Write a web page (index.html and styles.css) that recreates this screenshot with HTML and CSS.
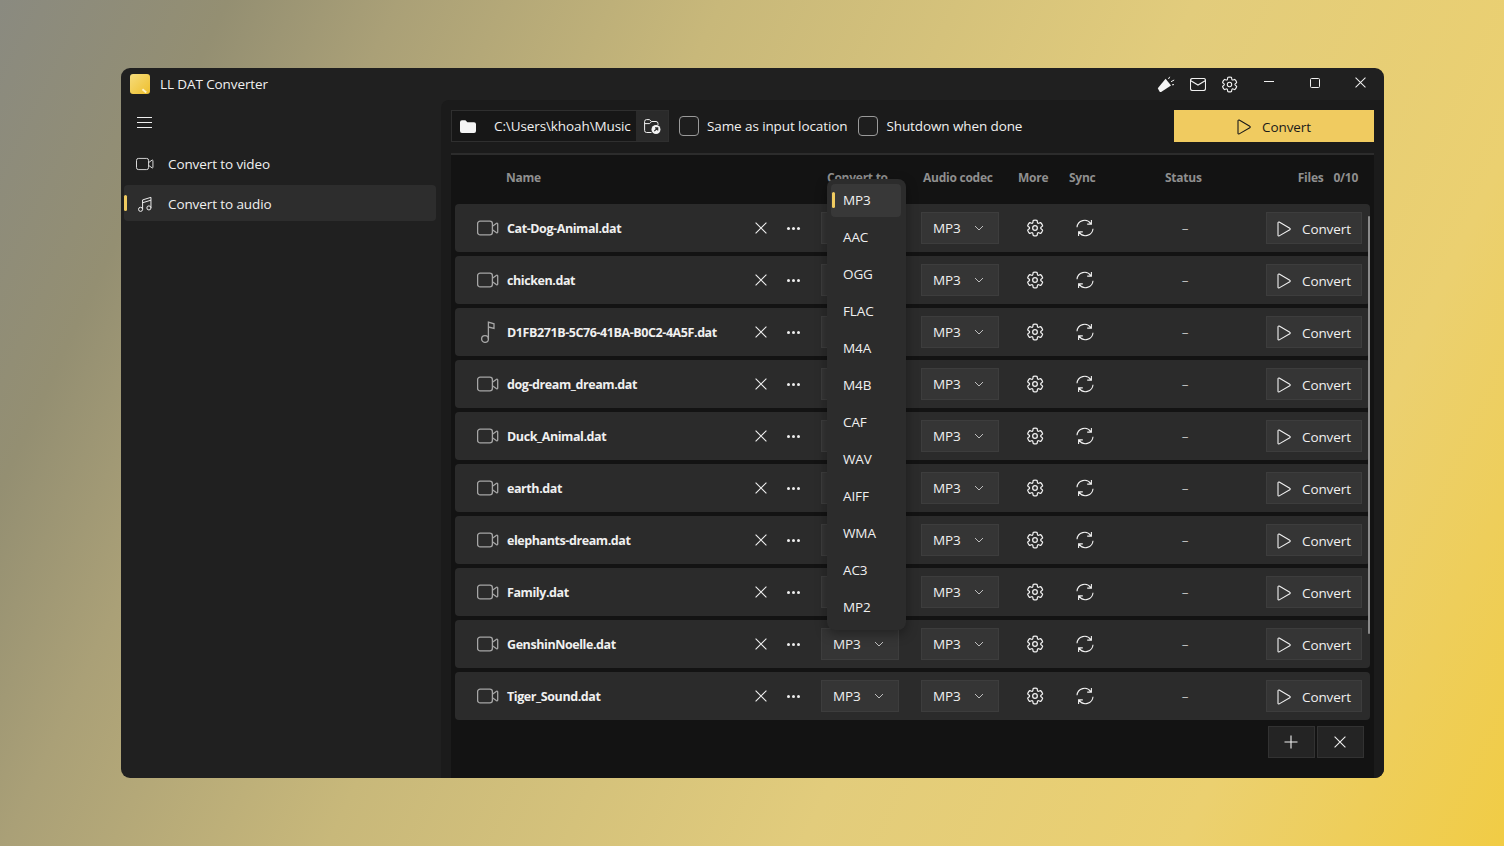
FILE: index.html
```html
<!DOCTYPE html>
<html lang="en">
<head>
<meta charset="utf-8">
<title>LL DAT Converter</title>
<link rel="stylesheet" href="styles.css">
</head>
<body>
<svg class="defs" width="0" height="0" aria-hidden="true">
  <symbol id="i-video" viewBox="0 0 22 16"><rect x=".6" y="1.1" width="14.8" height="13.8" rx="2.6"/><path d="M15.4 6.3l4.2-3a.7.7 0 0 1 1.1.6v8.2a.7.7 0 0 1-1.1.6l-4.2-3"/></symbol>
  <symbol id="i-note" viewBox="0 0 16 22"><circle cx="5" cy="18" r="3.4"/><path d="M8.4 18V1.200l5.600 1.600v4.600L8.400 6"/></symbol>
  <symbol id="i-music" viewBox="0 0 16 18"><circle cx="3" cy="15" r="2.3"/><circle cx="12.4" cy="13.4" r="2.3"/><path d="M5.3 15V4.400l9.400-2.900v11.900M5.300 7.600l9.400-2.900"/></symbol>
  <symbol id="i-x" viewBox="0 0 12 12"><path d="M.6.6l10.800 10.800M11.400.6L.6 11.400"/></symbol>
  <symbol id="i-chev" viewBox="0 0 10 6"><path d="M1 1l4 4 4-4"/></symbol>
  <symbol id="i-gear" viewBox="0 0 20 20"><path d="M1.91 7.38A8.5 8.5 0 0 1 3.78 4.17a.5.5 0 0 1 .54-.14l1.92.69a1 1 0 0 0 1.32-.76l.36-2.01a.5.5 0 0 1 .39-.4 8.5 8.5 0 0 1 3.7 0c.2.04.35.2.38.4l.37 2.01a1 1 0 0 0 1.32.76l1.92-.69a.5.5 0 0 1 .54.14 8.5 8.5 0 0 1 1.87 3.21.5.5 0 0 1-.15.53l-1.56 1.32a1 1 0 0 0 0 1.52l1.56 1.32a.5.5 0 0 1 .15.53 8.5 8.5 0 0 1-1.87 3.21.5.5 0 0 1-.54.14l-1.92-.69a1 1 0 0 0-1.32.76l-.37 2.01a.5.5 0 0 1-.38.4 8.5 8.5 0 0 1-3.7 0 .5.5 0 0 1-.39-.4l-.36-2.01a1 1 0 0 0-1.32-.76l-1.92.69a.5.5 0 0 1-.54-.14 8.5 8.5 0 0 1-1.87-3.21.5.5 0 0 1 .15-.53l1.56-1.32a1 1 0 0 0 0-1.52L2.06 7.91a.5.5 0 0 1-.15-.53Z"/><circle cx="10" cy="10" r="2.6"/></symbol>
  <symbol id="i-sync" viewBox="0 0 18 18"><path d="M1 8.300A7.600 7.600 0 0 1 14.800 4.600M17 9.700A7.600 7.600 0 0 1 3.200 13.400M15.400.9v4.200h-4.200M2.600 17.100v-4.200h4.200"/></symbol>
  <symbol id="i-play" viewBox="0 0 14 16"><path d="M1 1.800a.8.8 0 0 1 1.200-.7l10.600 6.200a.8.8 0 0 1 0 1.400L2.200 14.900a.8.8 0 0 1-1.200-.7z"/></symbol>
</svg>

<div class="window">
  <header class="titlebar">
    <div class="logo"><span class="logo-mark"></span></div>
    <span class="app-title">LL DAT Converter</span>
    <div class="title-actions">
      <svg class="ico-mega" viewBox="0 0 18 17"><path class="solid" d="M.8 12.300L8.600 2.800 14 9.500 4.500 15.800A1.600 1.600 0 0 1 2.500 15.600z"/><path class="thin" d="M11.500 3l1.200-2.200M14 5.700l3.200-1.700M15 8.800l2-.2"/></svg>
      <svg class="ico-mail line" viewBox="0 0 16 13"><rect x=".5" y=".5" width="15" height="12" rx="2"/><path d="M.8 2.800L8 7l7.200-4.200"/></svg>
      <svg class="ico-16 line" viewBox="0 0 20 20"><use href="#i-gear"/></svg>
    </div>
    <div class="caption">
      <span class="cap-min"></span>
      <span class="cap-max"></span>
      <svg class="ico-x11 line" viewBox="0 0 12 12"><use href="#i-x"/></svg>
    </div>
  </header>

  <div class="body">
    <aside class="sidebar">
      <div class="hamburger"><span></span><span></span><span></span></div>
      <nav class="nav">
        <a class="nav-item"><svg class="nav-ico line" viewBox="0 0 22 16"><use href="#i-video"/></svg>Convert to video</a>
        <a class="nav-item active"><svg class="nav-ico-music line" viewBox="0 0 16 18"><use href="#i-music"/></svg>Convert to audio</a>
      </nav>
    </aside>

    <main class="main">
      <div class="toolbar">
        <div class="path-box">
          <svg class="ico-folder" viewBox="0 0 16 13"><path d="M0 2.200A2 2 0 0 1 2 .2h3.400l2 2H14a2 2 0 0 1 2 2V11a2 2 0 0 1-2 2H2a2 2 0 0 1-2-2z"/></svg>
          <span class="path-text">C:\Users\khoah\Music</span>
          <span class="path-btn">
            <svg class="ico-open" viewBox="0 0 17 15"><path class="thin" d="M7.500 13.500H2.600a2 2 0 0 1-2-2V2.600a2 2 0 0 1 2-2h2.900l1.800 1.900H12a2 2 0 0 1 2 2v1.400M.6 4.600h5l1.800-1.800"/><circle class="solid" cx="12" cy="10.500" r="4.500"/><path class="cut" d="M10.300 12.200l3.200-3.200M11 8.800h2.700v2.700"/></svg>
          </span>
        </div>
        <label class="check"><span class="box"></span>Same as input location</label>
        <label class="check"><span class="box"></span>Shutdown when done</label>
        <button class="primary"><svg class="ico-play" viewBox="0 0 14 16"><use href="#i-play"/></svg>Convert</button>
      </div>

      <section class="panel">
        <div class="head">
          <span>Name</span><span>Convert to</span><span>Audio codec</span><span>More</span><span>Sync</span><span>Status</span>
          <span class="head-files"><span>Files</span><span>0/10</span></span>
        </div>
        <div class="rows">
          <div class="row">
            <svg class="file-ico line dim" viewBox="0 0 22 16"><use href="#i-video"/></svg>
            <span class="name">Cat-Dog-Animal.dat</span>
            <svg class="ico-x line" viewBox="0 0 12 12"><use href="#i-x"/></svg>
            <span class="dots"><i></i><i></i><i></i></span>
            <span class="combo">MP3<svg class="chev" viewBox="0 0 10 6"><use href="#i-chev"/></svg></span>
            <span class="combo">MP3<svg class="chev" viewBox="0 0 10 6"><use href="#i-chev"/></svg></span>
            <svg class="ico-gear line" viewBox="0 0 20 20"><use href="#i-gear"/></svg>
            <svg class="ico-sync line" viewBox="0 0 18 18"><use href="#i-sync"/></svg>
            <span class="dash">–</span>
            <button class="run"><svg class="ico-play" viewBox="0 0 14 16"><use href="#i-play"/></svg>Convert</button>
          </div>
          <div class="row">
            <svg class="file-ico line dim" viewBox="0 0 22 16"><use href="#i-video"/></svg>
            <span class="name">chicken.dat</span>
            <svg class="ico-x line" viewBox="0 0 12 12"><use href="#i-x"/></svg>
            <span class="dots"><i></i><i></i><i></i></span>
            <span class="combo">MP3<svg class="chev" viewBox="0 0 10 6"><use href="#i-chev"/></svg></span>
            <span class="combo">MP3<svg class="chev" viewBox="0 0 10 6"><use href="#i-chev"/></svg></span>
            <svg class="ico-gear line" viewBox="0 0 20 20"><use href="#i-gear"/></svg>
            <svg class="ico-sync line" viewBox="0 0 18 18"><use href="#i-sync"/></svg>
            <span class="dash">–</span>
            <button class="run"><svg class="ico-play" viewBox="0 0 14 16"><use href="#i-play"/></svg>Convert</button>
          </div>
          <div class="row">
            <svg class="note-ico line dim" viewBox="0 0 16 22"><use href="#i-note"/></svg>
            <span class="name">D1FB271B-5C76-41BA-B0C2-4A5F.dat</span>
            <svg class="ico-x line" viewBox="0 0 12 12"><use href="#i-x"/></svg>
            <span class="dots"><i></i><i></i><i></i></span>
            <span class="combo">MP3<svg class="chev" viewBox="0 0 10 6"><use href="#i-chev"/></svg></span>
            <span class="combo">MP3<svg class="chev" viewBox="0 0 10 6"><use href="#i-chev"/></svg></span>
            <svg class="ico-gear line" viewBox="0 0 20 20"><use href="#i-gear"/></svg>
            <svg class="ico-sync line" viewBox="0 0 18 18"><use href="#i-sync"/></svg>
            <span class="dash">–</span>
            <button class="run"><svg class="ico-play" viewBox="0 0 14 16"><use href="#i-play"/></svg>Convert</button>
          </div>
          <div class="row">
            <svg class="file-ico line dim" viewBox="0 0 22 16"><use href="#i-video"/></svg>
            <span class="name">dog-dream_dream.dat</span>
            <svg class="ico-x line" viewBox="0 0 12 12"><use href="#i-x"/></svg>
            <span class="dots"><i></i><i></i><i></i></span>
            <span class="combo">MP3<svg class="chev" viewBox="0 0 10 6"><use href="#i-chev"/></svg></span>
            <span class="combo">MP3<svg class="chev" viewBox="0 0 10 6"><use href="#i-chev"/></svg></span>
            <svg class="ico-gear line" viewBox="0 0 20 20"><use href="#i-gear"/></svg>
            <svg class="ico-sync line" viewBox="0 0 18 18"><use href="#i-sync"/></svg>
            <span class="dash">–</span>
            <button class="run"><svg class="ico-play" viewBox="0 0 14 16"><use href="#i-play"/></svg>Convert</button>
          </div>
          <div class="row">
            <svg class="file-ico line dim" viewBox="0 0 22 16"><use href="#i-video"/></svg>
            <span class="name">Duck_Animal.dat</span>
            <svg class="ico-x line" viewBox="0 0 12 12"><use href="#i-x"/></svg>
            <span class="dots"><i></i><i></i><i></i></span>
            <span class="combo">MP3<svg class="chev" viewBox="0 0 10 6"><use href="#i-chev"/></svg></span>
            <span class="combo">MP3<svg class="chev" viewBox="0 0 10 6"><use href="#i-chev"/></svg></span>
            <svg class="ico-gear line" viewBox="0 0 20 20"><use href="#i-gear"/></svg>
            <svg class="ico-sync line" viewBox="0 0 18 18"><use href="#i-sync"/></svg>
            <span class="dash">–</span>
            <button class="run"><svg class="ico-play" viewBox="0 0 14 16"><use href="#i-play"/></svg>Convert</button>
          </div>
          <div class="row">
            <svg class="file-ico line dim" viewBox="0 0 22 16"><use href="#i-video"/></svg>
            <span class="name">earth.dat</span>
            <svg class="ico-x line" viewBox="0 0 12 12"><use href="#i-x"/></svg>
            <span class="dots"><i></i><i></i><i></i></span>
            <span class="combo">MP3<svg class="chev" viewBox="0 0 10 6"><use href="#i-chev"/></svg></span>
            <span class="combo">MP3<svg class="chev" viewBox="0 0 10 6"><use href="#i-chev"/></svg></span>
            <svg class="ico-gear line" viewBox="0 0 20 20"><use href="#i-gear"/></svg>
            <svg class="ico-sync line" viewBox="0 0 18 18"><use href="#i-sync"/></svg>
            <span class="dash">–</span>
            <button class="run"><svg class="ico-play" viewBox="0 0 14 16"><use href="#i-play"/></svg>Convert</button>
          </div>
          <div class="row">
            <svg class="file-ico line dim" viewBox="0 0 22 16"><use href="#i-video"/></svg>
            <span class="name">elephants-dream.dat</span>
            <svg class="ico-x line" viewBox="0 0 12 12"><use href="#i-x"/></svg>
            <span class="dots"><i></i><i></i><i></i></span>
            <span class="combo">MP3<svg class="chev" viewBox="0 0 10 6"><use href="#i-chev"/></svg></span>
            <span class="combo">MP3<svg class="chev" viewBox="0 0 10 6"><use href="#i-chev"/></svg></span>
            <svg class="ico-gear line" viewBox="0 0 20 20"><use href="#i-gear"/></svg>
            <svg class="ico-sync line" viewBox="0 0 18 18"><use href="#i-sync"/></svg>
            <span class="dash">–</span>
            <button class="run"><svg class="ico-play" viewBox="0 0 14 16"><use href="#i-play"/></svg>Convert</button>
          </div>
          <div class="row">
            <svg class="file-ico line dim" viewBox="0 0 22 16"><use href="#i-video"/></svg>
            <span class="name">Family.dat</span>
            <svg class="ico-x line" viewBox="0 0 12 12"><use href="#i-x"/></svg>
            <span class="dots"><i></i><i></i><i></i></span>
            <span class="combo">MP3<svg class="chev" viewBox="0 0 10 6"><use href="#i-chev"/></svg></span>
            <span class="combo">MP3<svg class="chev" viewBox="0 0 10 6"><use href="#i-chev"/></svg></span>
            <svg class="ico-gear line" viewBox="0 0 20 20"><use href="#i-gear"/></svg>
            <svg class="ico-sync line" viewBox="0 0 18 18"><use href="#i-sync"/></svg>
            <span class="dash">–</span>
            <button class="run"><svg class="ico-play" viewBox="0 0 14 16"><use href="#i-play"/></svg>Convert</button>
          </div>
          <div class="row">
            <svg class="file-ico line dim" viewBox="0 0 22 16"><use href="#i-video"/></svg>
            <span class="name">GenshinNoelle.dat</span>
            <svg class="ico-x line" viewBox="0 0 12 12"><use href="#i-x"/></svg>
            <span class="dots"><i></i><i></i><i></i></span>
            <span class="combo">MP3<svg class="chev" viewBox="0 0 10 6"><use href="#i-chev"/></svg></span>
            <span class="combo">MP3<svg class="chev" viewBox="0 0 10 6"><use href="#i-chev"/></svg></span>
            <svg class="ico-gear line" viewBox="0 0 20 20"><use href="#i-gear"/></svg>
            <svg class="ico-sync line" viewBox="0 0 18 18"><use href="#i-sync"/></svg>
            <span class="dash">–</span>
            <button class="run"><svg class="ico-play" viewBox="0 0 14 16"><use href="#i-play"/></svg>Convert</button>
          </div>
          <div class="row">
            <svg class="file-ico line dim" viewBox="0 0 22 16"><use href="#i-video"/></svg>
            <span class="name">Tiger_Sound.dat</span>
            <svg class="ico-x line" viewBox="0 0 12 12"><use href="#i-x"/></svg>
            <span class="dots"><i></i><i></i><i></i></span>
            <span class="combo">MP3<svg class="chev" viewBox="0 0 10 6"><use href="#i-chev"/></svg></span>
            <span class="combo">MP3<svg class="chev" viewBox="0 0 10 6"><use href="#i-chev"/></svg></span>
            <svg class="ico-gear line" viewBox="0 0 20 20"><use href="#i-gear"/></svg>
            <svg class="ico-sync line" viewBox="0 0 18 18"><use href="#i-sync"/></svg>
            <span class="dash">–</span>
            <button class="run"><svg class="ico-play" viewBox="0 0 14 16"><use href="#i-play"/></svg>Convert</button>
          </div>
        </div>
        <div class="bulk">
          <span class="bulk-btn"><svg class="ico-plus line" viewBox="0 0 14 14"><path d="M7 .5v13M.5 7h13"/></svg></span>
          <span class="bulk-btn"><svg class="ico-x line" viewBox="0 0 12 12"><use href="#i-x"/></svg></span>
        </div>
        <span class="scrollbar"></span>
      </section>

      <ul class="menu">
        <li class="sel">MP3</li><li>AAC</li><li>OGG</li><li>FLAC</li><li>M4A</li><li>M4B</li><li>CAF</li><li>WAV</li><li>AIFF</li><li>WMA</li><li>AC3</li><li>MP2</li>
      </ul>
    </main>
  </div>
</div>
</body>
</html>
```
FILE: styles.css
```css
* { box-sizing: border-box; }
html, body { margin: 0; height: 100%; }
body {
  padding: 68px 120px 68px 121px;
  overflow: hidden;
  font-family: "Open Sans", "Noto Sans", sans-serif;
  font-size: 13.5px;
  letter-spacing: -.1px;
  color: #f0f0f0;
  background: linear-gradient(115deg, #8a8a80 0%, #948f72 12%, #aaa077 21%, #c8b87a 38%, #e2cc7c 63%, #ebd070 83%, #f1cc45 100%);
}
.defs { position: absolute; }
svg { display: block; flex: none; }
.line, .line use { fill: none; stroke: #f0f0f0; stroke-width: 1.1; }
.dim, .dim use { stroke: #a6a6a6; stroke-width: 1.3; }

.window {
  width: 1263px;
  height: 710px;
  display: flex;
  flex-direction: column;
  background: #202020;
  border-radius: 9px;
  overflow: hidden;
}
.titlebar {
  height: 32px;
  flex: none;
  display: flex;
  align-items: center;
  padding: 0 0 0 9px;
}
.logo {
  width: 20px;
  height: 20px;
  border-radius: 3px;
  background: linear-gradient(135deg, #f6dc7c, #eebf2d);
  position: relative;
}
.logo-mark {
  position: absolute;
  right: 3px;
  bottom: 3px;
  width: 5px;
  height: 1.5px;
  background: #fff3c4;
  transform: rotate(40deg);
}
.app-title { margin-left: 10px; }
.title-actions { margin-left: auto; display: flex; align-items: center; gap: 15px; }
.ico-mega { width: 18px; height: 17px; }
.ico-mail { width: 16px; height: 13px; }
.ico-16 { width: 17px; height: 17px; }
.ico-16 use { stroke-width: 1.3; }
.solid { fill: #f4f4f4; }
.thin { fill: none; stroke: #f0f0f0; stroke-width: 1; }
.cut { fill: none; stroke: #2a2a2a; stroke-width: 1.2; }
.caption { display: flex; align-items: center; margin-left: 26px; width: 120px; height: 32px; }
.cap-min { width: 10px; height: 1px; background: #f0f0f0; margin-right: 36px; margin-top: -5px; }
.cap-max { width: 10px; height: 10px; border: 1px solid #f0f0f0; border-radius: 1.5px; margin-right: 35px; margin-top: -2px; }
.ico-x11 { width: 11px; height: 11px; margin-top: -3px; }

.body { flex: 1; display: flex; min-height: 0; }
.sidebar { width: 320px; flex: none; padding: 0 5px 0 3px; }
.hamburger { width: 15px; display: flex; flex-direction: column; gap: 4px; margin: 17px 0 0 13px; }
.hamburger span { height: 1px; background: #eee; }
.nav { margin-top: 17px; display: flex; flex-direction: column; gap: 4px; }
.nav-item {
  height: 36px;
  display: flex;
  align-items: center;
  border-radius: 4px;
  padding: 2px 0 0 12px;
  position: relative;
}
.nav-item.active { background: #2d2d2d; }
.nav-item.active::before {
  content: "";
  position: absolute;
  left: 0;
  top: 10px;
  width: 3px;
  height: 16px;
  border-radius: 2px;
  background: #f0cb60;
}
.nav-ico { width: 18px; height: 18px; margin-right: 14px; }
.nav-ico-music { width: 16px; height: 16px; margin: 0 15px 0 1px; }

.main {
  flex: 1;
  min-width: 0;
  background: #1b1b1b;
  border-top-left-radius: 8px;
  display: flex;
  flex-direction: column;
  position: relative;
  padding: 10px 10px 0;
}
.toolbar { height: 32px; flex: none; display: flex; align-items: center; }
.path-box {
  width: 218px;
  height: 32px;
  display: flex;
  align-items: center;
  background: #171717;
  border: 1px solid #2f2f2f;
}
.ico-folder { width: 16px; height: 13px; margin-left: 8px; fill: #f4f4f4; }
.path-text { margin-left: 18px; width: 143px; white-space: nowrap; }
.path-btn { width: 32px; height: 30px; background: #2a2a2a; display: flex; align-items: center; justify-content: center; }
.ico-open { width: 17px; height: 15px; }
.check { display: flex; align-items: center; margin-left: 10px; white-space: nowrap; }
.check + .check { margin-left: 11px; }
.box { width: 20px; height: 20px; border: 1px solid #9a9a9a; border-radius: 4px; margin-right: 8px; background: #1e1e1e; }
.primary {
  margin-left: auto;
  width: 200px;
  height: 32px;
  border: 0;
  background: #f0cb60;
  color: #1a1a1a;
  font: inherit;
  letter-spacing: inherit;
  display: flex;
  align-items: center;
  justify-content: center;
  gap: 11px;
  padding: 1px 0 0;
}
.primary .ico-play use { fill: none; stroke: #1a1a1a; stroke-width: 1.1; }
.ico-play { width: 14px; height: 16px; }

.panel {
  flex: 1;
  margin-top: 11px;
  border-top: 2px solid #2c2c2c;
  background: #131313;
  display: flex;
  flex-direction: column;
  position: relative;
  min-height: 0;
}
.head {
  height: 49px;
  flex: none;
  display: grid;
  grid-template-columns: 321px 96px 95px 51px 96px auto 1fr;
  padding: 0 16px 5px 55px;
  align-items: center;
  font-size: 12px;
  font-weight: 700;
  letter-spacing: -.25px;
  color: #8f8f8f;
}
.head-files { display: flex; justify-content: flex-end; gap: 10px; }
.rows { padding-left: 4px; display: flex; flex-direction: column; gap: 4px; }
.row {
  width: 915px;
  height: 48px;
  background: #2b2b2b;
  border-radius: 4px;
  display: grid;
  grid-template-columns: 52px 238px 32px 32px 90px 100px 72px 28px 167px 96px;
  align-items: center;
}
.file-ico { width: 22px; height: 16px; justify-self: end; margin-right: 8px; }
.note-ico { width: 16px; height: 22px; justify-self: end; margin-right: 11px; }
.name { font-size: 12.5px; font-weight: 700; letter-spacing: -.42px; white-space: nowrap; }
.ico-x { width: 12px; height: 12px; justify-self: center; }
.dots { display: flex; gap: 2px; justify-self: center; }
.dots i { width: 3px; height: 3px; border-radius: 50%; background: #eee; }
.combo {
  margin-left: 12px;
  width: 78px;
  height: 32px;
  background: #353535;
  border: 1px solid #3d3d3d;
  display: flex;
  align-items: center;
  padding-left: 11px;
}
.row .combo + .combo { margin-left: 22px; }
.chev { width: 10px; height: 6px; margin-left: 13px; fill: none; stroke: #bdbdbd; stroke-width: 1; }
.ico-gear { width: 18px; height: 18px; justify-self: center; }
.ico-gear use { stroke-width: 1.4; }
.ico-sync { width: 18px; height: 18px; justify-self: end; margin-right: 5px; }
.dash { justify-self: center; padding-left: 5px; color: #bdbdbd; }
.run {
  width: 96px;
  height: 32px;
  background: #353535;
  border: 1px solid #3d3d3d;
  color: #f0f0f0;
  font: inherit;
  letter-spacing: inherit;
  display: flex;
  align-items: center;
  padding: 1px 0 0 10px;
  gap: 11px;
}
.run .ico-play use { fill: none; stroke: #f0f0f0; stroke-width: 1.1; }

.bulk { display: flex; justify-content: flex-end; gap: 2px; padding: 6px 10px 0 0; }
.bulk-btn {
  width: 47px;
  height: 32px;
  background: #242424;
  border: 1px solid #323232;
  padding-right: 2px;
  display: flex;
  align-items: center;
  justify-content: center;
}
.ico-plus { width: 14px; height: 14px; }
.scrollbar { position: absolute; left: 917px; top: 61px; width: 2px; height: 418px; background: #8a8a8a; border-radius: 1px; }

.menu {
  position: absolute;
  left: 386px;
  top: 79px;
  width: 79px;
  height: 451px;
  margin: 0;
  padding: 5px 5px 5px 4px;
  list-style: none;
  background: #2c2c2c;
  border-radius: 8px;
  box-shadow: 0 4px 12px rgba(0,0,0,.35);
}
.menu li { height: 33px; margin-bottom: 4px; line-height: 32px; padding-left: 12px; position: relative; border-radius: 4px; }
.menu .sel { background: #383838; }
.menu .sel::before {
  content: "";
  position: absolute;
  left: 1px;
  top: 8px;
  width: 3px;
  height: 16px;
  border-radius: 2px;
  background: #f0cb60;
}
```
